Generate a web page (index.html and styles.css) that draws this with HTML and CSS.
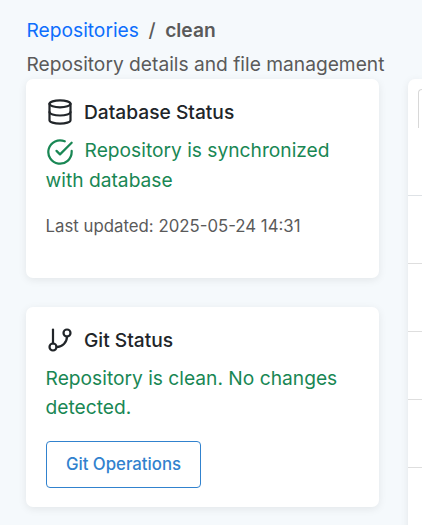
FILE: index.html
```html
<!DOCTYPE html>
<html lang="en">
<head>
<meta charset="utf-8">
<title>clean</title>
<link rel="stylesheet" href="styles.css">
</head>
<body>
<header class="page-header">
  <nav class="breadcrumb"><a class="crumb-link" href="#">Repositories</a><span class="separator">/</span><span class="current">clean</span></nav>
  <p class="subtitle">Repository details and file management</p>
</header>
<main class="columns">
  <div class="sidebar">
    <section class="card database">
      <h2 class="card-title"><svg class="icon" viewBox="0 0 24 24"><ellipse cx="12" cy="5" rx="9" ry="3"/><path d="M21 12c0 1.66-4 3-9 3s-9-1.34-9-3"/><path d="M3 5v14c0 1.66 4 3 9 3s9-1.34 9-3V5"/></svg><span>Database Status</span></h2>
      <p class="status"><svg class="icon inline" viewBox="0 0 24 24"><path d="M22 11.08V12a10 10 0 1 1-5.93-9.14"/><path d="M22 4 12 14.01l-3-3"/></svg>Repository is synchronized with database</p>
      <p class="updated">Last updated: 2025-05-24 14:31</p>
    </section>
    <section class="card git">
      <h2 class="card-title"><svg class="icon" viewBox="0 0 24 24"><path d="M6 3v12"/><circle cx="18" cy="6" r="3"/><circle cx="6" cy="18" r="3"/><path d="M18 9a9 9 0 0 1-9 9"/></svg><span>Git Status</span></h2>
      <p class="status">Repository is clean. No changes detected.</p>
      <button class="button">Git Operations</button>
    </section>
  </div>
  <section class="files">
    <div class="toolbar"><div class="field"></div></div>
    <div class="row"></div>
    <div class="row"></div>
    <div class="row"></div>
    <div class="row"></div>
    <div class="row"></div>
  </section>
</main>
</body>
</html>
```
FILE: styles.css
```css
* { box-sizing: border-box; }
body {
  margin: 0;
  height: 525px;
  overflow: hidden;
  background: #f5f9fc;
  color: #212529;
  font: 400 19.2px/30px Inter, sans-serif;
}
h2, p { margin: 0; }
.page-header {
  height: 79px;
  padding: 15px 0 0 26.5px;
  color: #5a5a5a;
  white-space: nowrap;
}
.breadcrumb { height: 34px; }
.crumb-link { color: #0d6efd; text-decoration: none; }
.separator { margin: 0 9.6px; font-weight: 500; }
.current { font-weight: 600; }
.columns {
  display: grid;
  grid-template-columns: 353px 1fr;
  column-gap: 29px;
  padding-left: 26px;
}
.sidebar { display: flex; flex-direction: column; gap: 29px; }
.card, .files {
  background: #fff;
  border-radius: 7px;
  box-shadow: 0 2px 8px rgba(0, 0, 0, .08);
}
.card { padding: 18px 20px 0 19.6px; }
.database { height: 199px; }
.git { height: 200px; }
.card-title {
  display: flex;
  align-items: center;
  gap: 10px;
  height: 30px;
  margin-bottom: 8px;
  font-size: 19.2px;
  font-weight: 500;
}
.icon {
  flex: none;
  width: 28px;
  height: 28px;
  margin-left: .4px;
  fill: none;
  stroke: currentColor;
  stroke-width: 1.9;
  stroke-linecap: round;
  stroke-linejoin: round;
}
.inline { margin: 3px 11px -9.2px 0; }
.status { color: #198754; }
.updated {
  margin-top: 17px;
  color: #5a5a5a;
  font-size: 16.8px;
  line-height: 28px;
}
.button {
  display: block;
  width: 155px;
  height: 47px;
  margin: 19px 0 0 .4px;
  padding: 0 0 1px;
  background: #fff;
  border: 1px solid #3182ce;
  border-radius: 4px;
  color: #3182ce;
  font: 500 16.8px/24px Inter, sans-serif;
}
.git .status { padding-top: 1px; line-height: 29px; }
.files { height: 460px; border-radius: 7px 0 0 0; }
.toolbar { height: 117px; padding: 10px 0 0 10px; border-bottom: 1px solid #dee2e6; }
.field {
  height: 39px;
  border: 1px solid #d8d8d8;
  border-width: 1px 0 0 1px;
  border-radius: 5px 0 0 0;
}
.row { height: 68px; border-bottom: 1px solid #dedede; }
.row:last-child { border-bottom: 0; }
```
